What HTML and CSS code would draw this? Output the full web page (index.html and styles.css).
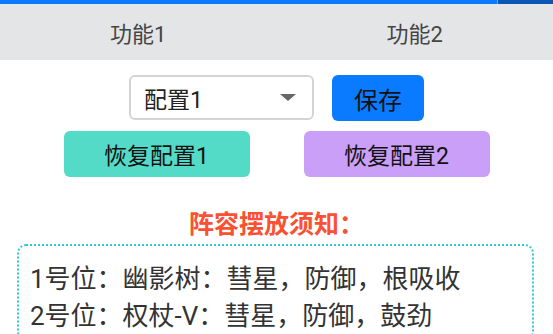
FILE: index.html
```html
<!DOCTYPE html>
<html lang="zh-CN">
<head>
    <meta charset="UTF-8">
    <meta name="viewport" content="width=device-width, initial-scale=1.0">
    <title>阵容配置</title>
    <link rel="stylesheet" href="styles.css">
</head>
<body>

    <div class="topbar">
        <div class="topbar-main"></div>
        <div class="topbar-side"></div>
    </div>

    <div class="tabs">
        <div class="tab">功能1</div>
        <div class="tab">功能2</div>
    </div>

    <div class="panel">
        <div class="row">
            <div class="select">
                <span>配置1</span>
                <span class="arrow"></span>
            </div>
            <button class="btn btn-save">保存</button>
        </div>

        <div class="row row-restore">
            <button class="btn btn-restore1">恢复配置1</button>
            <button class="btn btn-restore2">恢复配置2</button>
        </div>

        <h2 class="notice-title">阵容摆放须知：</h2>

        <div class="notice">
            <p>1号位：幽影树：彗星，防御，根吸收</p>
            <p>2号位：权杖-V：彗星，防御，鼓劲</p>
        </div>
    </div>

</body>
</html>
```

FILE: styles.css
```css
body {
    margin: 0;
    padding: 0;
    font-family: Roboto, "Noto Sans CJK SC", sans-serif;
    background: #fff;
    color: #333;
    overflow: hidden;
}
.topbar {
    display: flex;
    height: 4px;
}
.topbar-main {
    flex: 1;
    background: #0a7bff;
    border-right: 1px solid #5aa8ff;
}
.topbar-side {
    width: 55px;
    background: #0a57b6;
}
.tabs {
    display: flex;
    height: 56px;
    background: #e4e5e7;
}
.tab {
    flex: 1;
    display: flex;
    align-items: center;
    justify-content: center;
    font-size: 22px;
    color: #444;
}
.panel {
    padding-top: 15px;
}
.row {
    display: flex;
    justify-content: center;
    gap: 18px;
}
.select {
    box-sizing: border-box;
    width: 185px;
    height: 45px;
    border: 2px solid #d4d4d4;
    border-radius: 6px;
    display: flex;
    align-items: center;
    justify-content: space-between;
    padding: 0 16px 0 13px;
    font-size: 23px;
    color: #222;
}
.arrow {
    width: 0;
    height: 0;
    border-left: 8px solid transparent;
    border-right: 8px solid transparent;
    border-top: 7px solid #666;
}
.btn {
    border: none;
    font-family: inherit;
    font-size: 23px;
    color: #111;
    border-radius: 6px;
    padding: 0;
    cursor: pointer;
}
.btn-save {
    width: 92px;
    height: 46px;
    background: #0a7bff;
    font-size: 24px;
}
.row-restore {
    margin-top: 10px;
    gap: 54px;
}
.btn-restore1,
.btn-restore2 {
    width: 186px;
    height: 46px;
}
.btn-restore1 {
    background: #53dbc8;
}
.btn-restore2 {
    background: #c99ff7;
}
.notice-title {
    margin: 33px 0 4px;
    text-align: center;
    font-size: 25px;
    line-height: 30px;
    font-weight: bold;
    color: #fb5133;
}
.notice {
    margin: 0 19px 0 17px;
    padding: 15px 11px 4px;
    border: 2px dotted #2dc9d6;
    border-radius: 9px;
}
.notice p {
    margin: 0;
    font-size: 26px;
    line-height: 37px;
    color: #333;
}
```
